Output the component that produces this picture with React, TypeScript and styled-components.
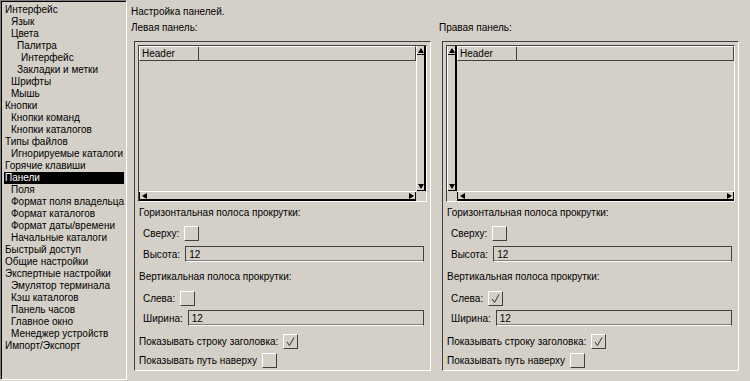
import React from 'react';
import styled, { createGlobalStyle, css } from 'styled-components';

const Global = createGlobalStyle`
  html, body { margin: 0; padding: 0; background: #d4d0c8; }
  body {
    font-family: "Liberation Sans", Arial, sans-serif;
    font-size: 10px;
    color: #000;
  }
  #root { width: 750px; height: 381px; overflow: hidden; }
`;

const BG = '#d4d0c8';

const Window = styled.div`
  display: flex;
  width: 750px;
  height: 381px;
  background: ${BG};
`;

const Tree = styled.ul`
  list-style: none;
  margin: 0;
  padding: 3px 2px 3px 3px;
  width: 127px;
  height: 380px;
  box-sizing: border-box;
  border: 1px solid;
  border-color: #808080 #fff #fff #808080;
  box-shadow: inset 1px 1px 0 #000;
  flex-shrink: 0;
`;

const TreeItem = styled.li<{ $indent: number; $selected?: boolean }>`
  height: 12px;
  line-height: 12px;
  padding-left: ${(p) => p.$indent}px;
  white-space: nowrap;
  ${(p) =>
    p.$selected &&
    css`
      background: #000;
      color: #fff;
    `}
`;

const Main = styled.div`
  flex: 1;
  display: flex;
  flex-direction: column;
  padding: 5px 0 0 4px;
`;

const Title = styled.div`
  height: 14px;
  line-height: 14px;
`;

const Columns = styled.div`
  display: flex;
  gap: 8px;
  margin-top: 2px;
`;

const Column = styled.div`
  display: flex;
  flex-direction: column;
  width: 300px;
`;

const ColumnLabel = styled.div`
  height: 14px;
  line-height: 14px;
`;

const Frame = styled.div`
  margin: 6px 0 0 3px;
  width: 297px;
  height: 330px;
  box-sizing: border-box;
  border: 1px solid;
  border-color: #404040 #fff #fff #404040;
  padding: 3px 3px 0 3px;
  display: flex;
  flex-direction: column;
`;

const ListBox = styled.div<{ $scrollLeft?: boolean }>`
  height: 157px;
  flex-shrink: 0;
  box-sizing: border-box;
  border: 1px solid;
  border-color: #404040 #fff #fff #404040;
  display: grid;
  grid-template-columns: ${(p) => (p.$scrollLeft ? '10px 1fr' : '1fr 10px')};
  grid-template-rows: 1fr 10px;
`;

const ListContent = styled.div`
  display: flex;
  flex-direction: column;
  min-width: 0;
`;

const Header = styled.div`
  display: flex;
  height: 15px;
  box-sizing: border-box;
  border-top: 1px solid #fff;
  border-left: 1px solid #fff;
  border-bottom: 1px solid #404040;
  border-right: 1px solid #404040;
`;

const HeaderCell = styled.div`
  width: 59px;
  box-sizing: border-box;
  padding-left: 2px;
  border-right: 1px solid #404040;
  line-height: 13px;
`;

const VScroll = styled.div`
  display: flex;
  flex-direction: column;
  justify-content: space-between;
  box-sizing: border-box;
  border-left: 1px solid #fff;
  border-right: 2px solid #000;
`;

const HScroll = styled.div`
  display: flex;
  justify-content: space-between;
  box-sizing: border-box;
  border-top: 1px solid #fff;
  border-bottom: 2px solid #000;
`;

const Corner = styled.div`
  background: ${BG};
`;

const ArrowButton = styled.div<{ $dir: 'up' | 'down' | 'left' | 'right' }>`
  display: flex;
  align-items: center;
  justify-content: center;
  box-sizing: border-box;
  ${(p) =>
    p.$dir === 'up' || p.$dir === 'down'
      ? css`
          height: 9px;
        `
      : css`
          width: 9px;
        `}
  ${(p) => p.$dir === 'up' && css`border-bottom: 1px solid #000;`}
  ${(p) => p.$dir === 'down' && css`border-bottom: 1px solid #000;`}
  ${(p) => p.$dir === 'right' && css`border-right: 1px solid #000;`}
  ${(p) => p.$dir === 'left' && css`border-left: 1px solid #000;`}
`;

const Triangle = styled.div<{ $dir: 'up' | 'down' | 'left' | 'right' }>`
  width: 0;
  height: 0;
  ${(p) =>
    p.$dir === 'up' &&
    css`
      border-left: 3px solid transparent;
      border-right: 3px solid transparent;
      border-bottom: 5px solid #000;
    `}
  ${(p) =>
    p.$dir === 'down' &&
    css`
      border-left: 3px solid transparent;
      border-right: 3px solid transparent;
      border-top: 5px solid #000;
    `}
  ${(p) =>
    p.$dir === 'left' &&
    css`
      border-top: 3px solid transparent;
      border-bottom: 3px solid transparent;
      border-right: 5px solid #000;
    `}
  ${(p) =>
    p.$dir === 'right' &&
    css`
      border-top: 3px solid transparent;
      border-bottom: 3px solid transparent;
      border-left: 5px solid #000;
    `}
`;

const SectionLabel = styled.div<{ $mt: number }>`
  margin-top: ${(p) => p.$mt}px;
  padding-left: 1px;
  height: 14px;
  line-height: 14px;
  white-space: nowrap;
`;

const Row = styled.div<{ $mt: number; $inset?: boolean }>`
  display: flex;
  align-items: center;
  gap: 5px;
  margin-top: ${(p) => p.$mt}px;
  height: 16px;
  padding-left: ${(p) => (p.$inset ? 5 : 1)}px;
  padding-right: 3px;
  white-space: nowrap;
`;

const CheckBox = styled.div`
  width: 15px;
  height: 15px;
  flex-shrink: 0;
  box-sizing: border-box;
  border: 1px solid;
  border-color: #fff #404040 #404040 #fff;
  display: flex;
  align-items: center;
  justify-content: center;
`;

const Input = styled.div`
  flex: 1;
  height: 16px;
  box-sizing: border-box;
  border: 1px solid;
  border-color: #404040 #404040 #fff #404040;
  box-shadow: inset 0 -1px 0 #808080;
  padding-left: 3px;
  line-height: 15px;
`;

const Check = () => (
  <svg width="13" height="13" viewBox="0 0 13 13">
    <polyline points="3,7 5.5,10.5 10,2.5" fill="none" stroke="#303030" strokeWidth="1" />
  </svg>
);

const treeItems: [string, number, boolean?][] = [
  ['Интерфейс', 1],
  ['Язык', 7],
  ['Цвета', 7],
  ['Палитра', 13],
  ['Интерфейс', 17],
  ['Закладки и метки', 13],
  ['Шрифты', 7],
  ['Мышь', 7],
  ['Кнопки', 1],
  ['Кнопки команд', 7],
  ['Кнопки каталогов', 7],
  ['Типы файлов', 1],
  ['Игнорируемые каталоги', 7],
  ['Горячие клавиши', 1],
  ['Панели', 1, true],
  ['Поля', 7],
  ['Формат поля владельца', 7],
  ['Формат каталогов', 7],
  ['Формат даты/времени', 7],
  ['Начальные каталоги', 7],
  ['Быстрый доступ', 1],
  ['Общие настройки', 1],
  ['Экспертные настройки', 1],
  ['Эмулятор терминала', 7],
  ['Кэш каталогов', 7],
  ['Панель часов', 7],
  ['Главное окно', 7],
  ['Менеджер устройств', 7],
  ['Импорт/Экспорт', 1],
];

const PanelList = ({ scrollLeft }: { scrollLeft?: boolean }) => {
  const content = (
    <ListContent key="c">
      <Header>
        <HeaderCell>Header</HeaderCell>
      </Header>
    </ListContent>
  );
  const vscroll = (
    <VScroll key="v">
      <ArrowButton $dir="up">
        <Triangle $dir="up" />
      </ArrowButton>
      <ArrowButton $dir="down">
        <Triangle $dir="down" />
      </ArrowButton>
    </VScroll>
  );
  const hscroll = (
    <HScroll key="h">
      <ArrowButton $dir="left">
        <Triangle $dir="left" />
      </ArrowButton>
      <ArrowButton $dir="right">
        <Triangle $dir="right" />
      </ArrowButton>
    </HScroll>
  );
  const corner = <Corner key="k" />;
  return (
    <ListBox $scrollLeft={scrollLeft}>
      {scrollLeft ? [vscroll, content, corner, hscroll] : [content, vscroll, hscroll, corner]}
    </ListBox>
  );
};

const PanelSettings = ({
  label,
  scrollLeft,
  leftChecked,
}: {
  label: string;
  scrollLeft?: boolean;
  leftChecked?: boolean;
}) => (
  <Column>
    <ColumnLabel>{label}</ColumnLabel>
    <Frame>
      <PanelList scrollLeft={scrollLeft} />
      <SectionLabel $mt={4}>Горизонтальная полоса прокрутки:</SectionLabel>
      <Row $mt={5} $inset>
        <span>Сверху:</span>
        <CheckBox />
      </Row>
      <Row $mt={5} $inset>
        <span>Высота:</span>
        <Input>12</Input>
      </Row>
      <SectionLabel $mt={8}>Вертикальная полоса прокрутки:</SectionLabel>
      <Row $mt={6} $inset>
        <span>Слева:</span>
        <CheckBox>{leftChecked && <Check />}</CheckBox>
      </Row>
      <Row $mt={4} $inset>
        <span>Ширина:</span>
        <Input>12</Input>
      </Row>
      <Row $mt={7}>
        <span>Показывать строку заголовка:</span>
        <CheckBox>
          <Check />
        </CheckBox>
      </Row>
      <Row $mt={3}>
        <span>Показывать путь наверху</span>
        <CheckBox />
      </Row>
    </Frame>
  </Column>
);

export default function App() {
  return (
    <>
      <Global />
      <Window>
        <Tree>
          {treeItems.map(([text, indent, sel], i) => (
            <TreeItem key={i} $indent={indent} $selected={sel}>
              {text}
            </TreeItem>
          ))}
        </Tree>
        <Main>
          <Title>Настройка панелей.</Title>
          <Columns>
            <PanelSettings label="Левая панель:" />
            <PanelSettings label="Правая панель:" scrollLeft leftChecked />
          </Columns>
        </Main>
      </Window>
    </>
  );
}
